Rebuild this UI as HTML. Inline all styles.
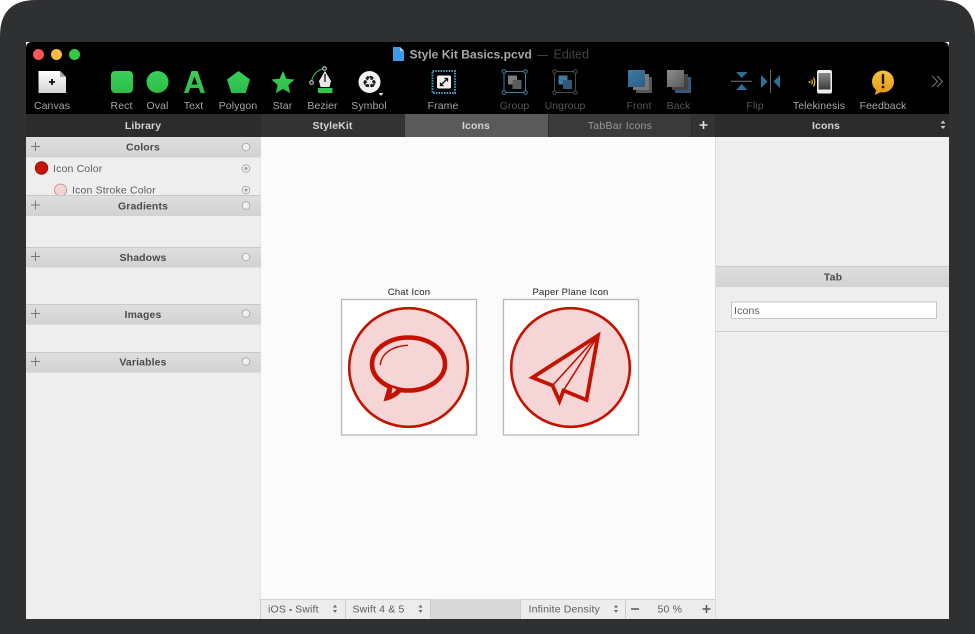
<!DOCTYPE html>
<html><head><meta charset="utf-8"><style>
html,body{margin:0;padding:0;background:#fff;width:975px;height:634px;overflow:hidden}
svg{display:block;position:absolute;left:0;top:0;font-family:"Liberation Sans",sans-serif;filter:blur(.3px)}
.l{font-size:10.5px;fill:#a6a6a6;text-anchor:middle;letter-spacing:.08px}
.d{fill:#565656}
.h{font-size:10.5px;font-weight:bold;fill:#4a4a4a;text-anchor:middle;letter-spacing:.12px}
.t{font-size:10.5px;font-weight:bold;fill:#d4d4d4;text-anchor:middle;letter-spacing:.1px}
.s{font-size:10.5px;fill:#5c5c5c;letter-spacing:.16px}
</style></head><body>
<svg width="975" height="634" viewBox="0 0 975 634">
<defs>
<linearGradient id="hd" x1="0" y1="0" x2="0" y2="1"><stop offset="0" stop-color="#dedede"/><stop offset="1" stop-color="#d2d2d2"/></linearGradient>
<linearGradient id="gr" x1="0" y1="0" x2="0" y2="1"><stop offset="0" stop-color="#3ad05a"/><stop offset="1" stop-color="#2cbc48"/></linearGradient>
<linearGradient id="pp" x1="0" y1="0" x2="0" y2="1"><stop offset="0" stop-color="#fff"/><stop offset="1" stop-color="#d4d4d4"/></linearGradient>
<linearGradient id="bl" x1="0" y1="0" x2="1" y2="1"><stop offset="0" stop-color="#3a7ea8"/><stop offset="1" stop-color="#30597f"/></linearGradient>
<linearGradient id="gy" x1="0" y1="0" x2="1" y2="1"><stop offset="0" stop-color="#8e8e8e"/><stop offset="1" stop-color="#5a5a5a"/></linearGradient>
<linearGradient id="ye" x1="0" y1="0" x2="0" y2="1"><stop offset="0" stop-color="#f6c33c"/><stop offset="1" stop-color="#e89a1c"/></linearGradient>
<linearGradient id="ph" x1="0" y1="0" x2="0" y2="1"><stop offset="0" stop-color="#8a8a8a"/><stop offset="1" stop-color="#3a3a3a"/></linearGradient>
</defs>

<!-- bezel -->
<path d="M0 634V36Q0 0 36 0H939Q975 0 975 36V634Z" fill="#2f3032"/>
<rect x="26" y="42" width="923" height="577" fill="#fff"/>
<path d="M26 114V48Q26 42 32 42H943Q949 42 949 48V114Z" fill="#000"/>

<!-- traffic lights -->
<circle cx="38.500" cy="54.500" r="5.500" fill="#fc5753"/><circle cx="56.500" cy="54.500" r="5.500" fill="#fdbc40"/><circle cx="74.500" cy="54.500" r="5.500" fill="#33c748"/>

<!-- title -->
<path d="M393 47h7l4 4v10h-11z" fill="#3d9be9"/><path d="M400 47l4 4h-4z" fill="#a9d3f5"/>
<text x="409.500" y="58.500" font-size="12.100" font-weight="bold" fill="#a8a8a8">Style Kit Basics.pcvd</text>
<text x="537" y="58.500" font-size="11" fill="#555">—</text>
<text x="553.500" y="58.500" font-size="12.500" fill="#444">Edited</text>

<!-- canvas icon -->
<path d="M38.500 71H60L66 77V93H38.500Z" fill="url(#pp)"/><path d="M60 71L66 77H60Z" fill="#aaa"/>
<path d="M49 82h6M52 79v6" stroke="#111" stroke-width="1.800" fill="none"/>
<!-- rect, oval -->
<rect x="111" y="71" width="22" height="22" rx="4" fill="url(#gr)"/>
<circle cx="157.500" cy="82" r="11" fill="url(#gr)"/>
<!-- A -->
<path d="M191.500 71H197.500L205 93H200.500L198.800 88H190.200L188.500 93H184ZM194.500 76.500L191.500 84.500H197.500Z" fill="url(#gr)" fill-rule="evenodd"/>
<!-- pentagon -->
<path d="M238.500 71L250 79.500L245.700 93H231.300L227 79.500Z" fill="url(#gr)"/>
<!-- star -->
<path d="M283 71L286.400 78.800L294.500 79.500L288.400 85L290.200 93.300L283 89L275.800 93.300L277.600 85L271.500 79.500L279.600 78.800Z" fill="url(#gr)"/>
<!-- bezier -->
<path d="M311.500 82Q313 71 324.500 68.500" stroke="#35c552" stroke-width="1" fill="none"/>
<circle cx="311.500" cy="82.500" r="1.800" fill="#000" stroke="#ddd"/><circle cx="324.500" cy="68.500" r="1.800" fill="#000" stroke="#ddd"/>
<path d="M325 71L331 81L329.500 87H320.500L319 81Z" fill="#e8e8e8"/><path d="M325 74V82" stroke="#222" stroke-width="1.400"/><rect x="318" y="88" width="14.500" height="5" fill="#2fc84f"/>
<!-- symbol -->
<circle cx="369.500" cy="82" r="11" fill="#f2f2f2"/>
<text x="369.500" y="88" font-family="DejaVu Sans" font-size="17" fill="#222" text-anchor="middle">♻</text>
<path d="M378.500 93h5l-2.500 3z" fill="#ddd"/>
<!-- frame -->
<rect x="432.500" y="71" width="22.500" height="22" fill="none" stroke="#4ba3d4" stroke-width="2" stroke-dasharray="1.500 1.200"/>
<rect x="437" y="75.500" width="14" height="13" rx="1.500" fill="#ececec"/>
<path d="M440.500 85.500L447.500 78.500M444.500 78.500h3v3M440.500 82.500v3h3" stroke="#111" stroke-width="1.300" fill="none"/>
<!-- group -->
<g fill="none" stroke="#3a7ea8" stroke-width="1"><rect x="504" y="71.500" width="21.500" height="21"/><circle cx="504" cy="71.500" r="1.800" fill="#000"/><circle cx="525.500" cy="71.500" r="1.800" fill="#000"/><circle cx="504" cy="92.500" r="1.800" fill="#000"/><circle cx="525.500" cy="92.500" r="1.800" fill="#000"/></g>
<rect x="508" y="75.500" width="9" height="9" fill="#7d7d7d"/><rect x="512.500" y="80" width="9" height="9" fill="#5c5c5c"/>
<!-- ungroup -->
<g fill="none" stroke="#4a4a4a" stroke-width="1"><rect x="554.500" y="71.500" width="21" height="21"/><circle cx="554.500" cy="71.500" r="1.800" fill="#000"/><circle cx="575.500" cy="71.500" r="1.800" fill="#000"/><circle cx="554.500" cy="92.500" r="1.800" fill="#000"/><circle cx="575.500" cy="92.500" r="1.800" fill="#000"/></g>
<rect x="558.500" y="75.500" width="9" height="9" fill="#3c7ba6"/><rect x="563" y="80" width="9" height="9" fill="#32577a"/>
<!-- front -->
<rect x="636" y="77" width="16" height="16" fill="#555"/><rect x="633" y="74" width="16" height="16" fill="#777"/><rect x="628" y="70" width="17" height="17" fill="url(#bl)"/>
<!-- back -->
<rect x="675" y="77" width="16" height="16" fill="#37597c"/><rect x="672" y="74" width="16" height="16" fill="#444"/><rect x="667" y="70" width="17" height="17" fill="url(#gy)"/>
<!-- flip -->
<path d="M736 72h11.500l-5.750 6z" fill="#2f6f96"/><path d="M736 90h11.500l-5.750-6z" fill="#2f6f96"/><path d="M731 81.200h21" stroke="#777" stroke-width="1"/>
<path d="M761 75v13l6.500-6.500z" fill="#2f6f96"/><path d="M780 75v13l-6.500-6.500z" fill="#2f6f96"/><path d="M770.500 70v23" stroke="#666" stroke-width="1"/>
<!-- telekinesis -->
<circle cx="809.500" cy="82" r="1" fill="#f0c23a"/>
<path d="M811.500 79.500q1.500 2.500 0 5M813.500 77.500q2.500 4.500 0 9" stroke="#f0c23a" stroke-width="1.200" fill="none"/>
<rect x="817" y="70" width="15" height="23.500" rx="2" fill="#eee"/><rect x="818.500" y="73" width="12" height="16.500" fill="url(#ph)"/>
<!-- feedback -->
<path d="M876 90L875 95L881 92Z" fill="#e89a1c"/><circle cx="883" cy="81.500" r="11" fill="url(#ye)"/>
<path d="M883 75v8" stroke="#1a1a1a" stroke-width="2.400" stroke-linecap="round"/><circle cx="883" cy="87" r="1.400" fill="#1a1a1a"/>
<!-- chevrons -->
<path d="M932 76l5.500 5.500-5.500 5.500M937 76l5.500 5.500-5.500 5.500" stroke="#777" stroke-width="1" fill="none"/>

<!-- toolbar labels -->
<text class="l" x="52" y="109">Canvas</text><text class="l" x="121.500" y="109">Rect</text><text class="l" x="157.500" y="109">Oval</text><text class="l" x="193.500" y="109">Text</text><text class="l" x="238" y="109">Polygon</text><text class="l" x="282.500" y="109">Star</text><text class="l" x="322.500" y="109">Bezier</text><text class="l" x="369" y="109">Symbol</text><text class="l" x="443" y="109">Frame</text>
<text class="l d" x="514.500" y="109">Group</text><text class="l d" x="565" y="109">Ungroup</text><text class="l d" x="639" y="109">Front</text><text class="l d" x="678.500" y="109">Back</text><text class="l d" x="755" y="109">Flip</text>
<text class="l" x="819" y="109">Telekinesis</text><text class="l" x="883" y="109">Feedback</text>

<!-- tab bar -->
<rect x="26" y="114" width="923" height="23" fill="#2c2c2c"/>
<rect x="261" y="114" width="143.500" height="23" fill="#333"/>
<rect x="405" y="114" width="143" height="23" fill="#5a5a5a"/>
<rect x="549" y="114" width="142" height="23" fill="#3a3a3a"/>
<rect x="692" y="114" width="23" height="23" fill="#333"/>
<text class="t" x="143" y="129">Library</text><text class="t" x="332.500" y="129">StyleKit</text><text class="t" x="476" y="129">Icons</text>
<text class="t" x="620" y="129" style="fill:#9a9a9a;font-weight:normal;letter-spacing:.25px">TabBar Icons</text>
<path d="M699.500 125h8M703.500 121v8" stroke="#e4e4e4" stroke-width="1.600"/>
<text class="t" x="826" y="129">Icons</text>
<path d="M940.500 123.500l2.500-3 2.500 3zM940.500 126l2.500 3 2.500-3z" fill="#ccc"/>

<!-- left panel -->
<rect x="26" y="137" width="235" height="482" fill="#eeeeee"/>
<rect x="260.500" y="137" width="1" height="482" fill="#dcdcdc"/>
<rect x="26" y="137" width="235" height="20.500" fill="url(#hd)"/>
<text class="h" x="143" y="150.500">Colors</text>
<circle cx="41.500" cy="168" r="6.300" fill="#c81400" stroke="#8a1a10" stroke-width=".8"/>
<text class="s" x="53" y="172">Icon Color</text>
<circle cx="60.500" cy="190" r="6" fill="#f6d4d4" stroke="#b58a8a" stroke-width=".8"/>
<text class="s" x="72" y="193.500">Icon Stroke Color</text>
<rect x="26" y="195" width="235" height="21" fill="url(#hd)"/>
<rect x="26" y="247" width="235" height="20.500" fill="url(#hd)"/>
<rect x="26" y="304" width="235" height="20.500" fill="url(#hd)"/>
<rect x="26" y="352" width="235" height="20.500" fill="url(#hd)"/>
<path d="M26 195.500h235M26 247.500h235M26 304.500h235M26 352.500h235" stroke="#c8c8c8" stroke-width="1"/>
<text class="h" x="143" y="209.500">Gradients</text><text class="h" x="143" y="261">Shadows</text><text class="h" x="143" y="318">Images</text><text class="h" x="143" y="365.500">Variables</text>
<g stroke="#777" stroke-width="1" fill="none">
<path d="M31 146.500h9M35.500 142v9M31 205h9M35.500 200.500v9M31 256.500h9M35.500 252v9M31 313.500h9M35.500 309v9M31 361.500h9M35.500 357v9"/>
</g>
<g fill="#f0f0f0" stroke="#adadad" stroke-width="1">
<circle cx="246" cy="147" r="3.800"/><circle cx="246" cy="205.500" r="3.800"/><circle cx="246" cy="257" r="3.800"/><circle cx="246" cy="313.500" r="3.800"/><circle cx="246" cy="361.500" r="3.800"/>
<circle cx="246" cy="168.500" r="3.800"/><circle cx="246" cy="190" r="3.800"/>
</g>
<circle cx="246" cy="168.500" r="1.500" fill="#999"/><circle cx="246" cy="190" r="1.500" fill="#999"/>

<!-- canvas -->
<rect x="261" y="137" width="454" height="462" fill="#fbfbfb"/>
<rect x="715" y="137" width="1" height="482" fill="#dcdcdc"/>
<text x="409" y="295" font-size="9.500" fill="#222" text-anchor="middle" letter-spacing=".2">Chat Icon</text>
<text x="570.500" y="295" font-size="9.500" fill="#222" text-anchor="middle" letter-spacing=".2">Paper Plane Icon</text>
<rect x="341.500" y="299.500" width="135" height="135.500" fill="#fff" stroke="#b8b8b8" stroke-width="1.300"/>
<rect x="503.500" y="299.500" width="135" height="135.500" fill="#fff" stroke="#b8b8b8" stroke-width="1.300"/>

<circle cx="408.500" cy="367.500" r="59.300" fill="#f5d5d5" stroke="#c41200" stroke-width="2.600"/>
<ellipse cx="408.500" cy="364" rx="36.500" ry="26.500" fill="none" stroke="#c41200" stroke-width="4.600"/>
<path d="M388.500 384L383.500 401.300Q396 399 402.500 390.500L398 387Z" fill="#c41200"/>
<path d="M392.500 387.500L391.500 393.500Q394.500 392 396.500 389.500Z" fill="#f5d5d5"/>
<path d="M380.300 365C381 354 392 346 408 345.300" fill="none" stroke="#c41200" stroke-width="1.500"/>

<circle cx="570.500" cy="367.500" r="59.300" fill="#f5d5d5" stroke="#c41200" stroke-width="2.600"/>
<path d="M598 335.500L532.500 377.500L552.500 385.500L559.500 401L563.500 390.500L586.500 400Z" fill="none" stroke="#c41200" stroke-width="3.800" stroke-linejoin="miter" stroke-miterlimit="10"/>
<path d="M598 335.500L552.500 385.500M598 335.500L563.500 390.500" fill="none" stroke="#c41200" stroke-width="1.600"/>

<!-- right panel -->
<rect x="716" y="137" width="233" height="482" fill="#eeeeee"/>
<rect x="716" y="266" width="233" height="21" fill="url(#hd)"/>
<path d="M716 266.500h233" stroke="#c8c8c8"/>
<text class="h" x="833" y="280.500">Tab</text>
<rect x="731.500" y="302" width="205" height="16.500" fill="#fff" stroke="#c6c6c6"/>
<text class="s" x="734" y="314">Icons</text>
<path d="M716 331.500h233" stroke="#d0d0d0"/>

<!-- bottom bar -->
<rect x="261" y="599" width="454" height="20" fill="#ececec"/>
<path d="M261 599.500h454" stroke="#d2d2d2"/>
<rect x="431" y="599" width="89" height="20" fill="#d9d9d9"/>
<path d="M260.500 599v20M345.500 599v20M430.500 599v20M520.500 599v20M625.500 599v20" stroke="#cdcdcd"/>
<text class="s" x="268" y="612.500">iOS <tspan font-size="8">▪</tspan> Swift</text>
<text class="s" x="352.500" y="612.500">Swift 4 &amp; 5</text>
<text class="s" x="528.500" y="612.500">Infinite Density</text>
<text class="s" x="657.500" y="612.500">50 %</text>
<g fill="#666">
<path d="M333 607.500l2-2.700 2 2.700zM333 610l2 2.700 2-2.700z"/>
<path d="M418.500 607.500l2-2.700 2 2.700zM418.500 610l2 2.700 2-2.700z"/>
<path d="M614 607.500l2-2.700 2 2.700zM614 610l2 2.700 2-2.700z"/>
</g>
<path d="M631 609h8M702.500 609h8M706.500 605v8" stroke="#555" stroke-width="1.500"/>
</svg>
</body></html>
